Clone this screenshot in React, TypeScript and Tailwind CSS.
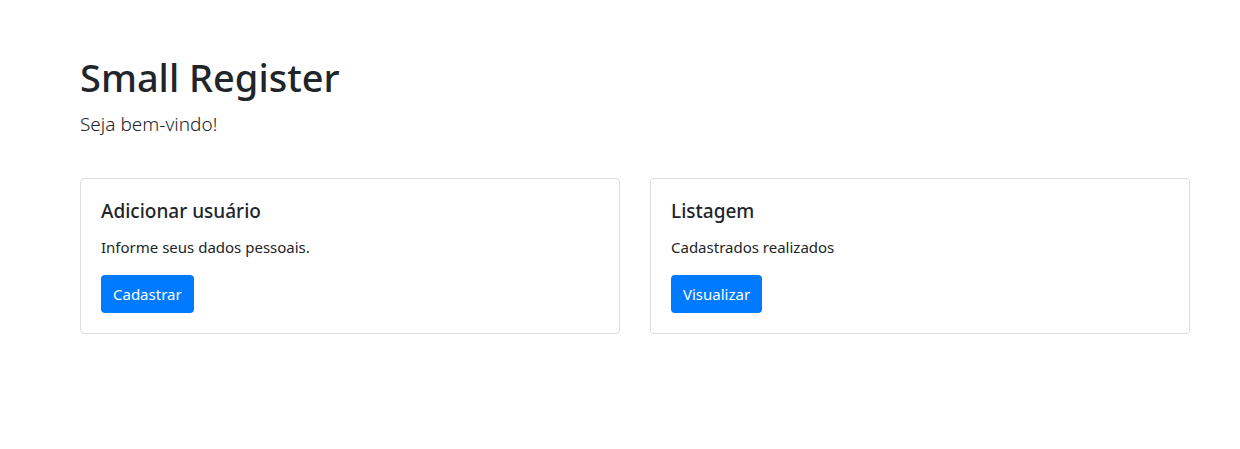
export default function App() {
  return (
    <div className="min-h-screen bg-white text-[#212529] font-['Noto_Sans',sans-serif]">
      <div className="pl-[80px] pr-[50px] pt-[53px]">
        <h1 className="text-[38px] leading-[48px] font-medium mb-2">Small Register</h1>
        <p className="text-[19px] leading-[30px] font-light mb-[39px]">Seja bem-vindo!</p>

        <div className="grid grid-cols-2 gap-[30px] w-[1110px]">
          {/* Card cadastro */}
          <div className="border border-black/[0.125] rounded p-5">
            <h5 className="text-[19px] leading-[24px] font-medium mb-3">Adicionar usuário</h5>
            <p className="text-[15px] leading-[24px] mb-4">Informe seus dados pessoais.</p>
            <a href="#" className="inline-block bg-[#007bff] text-white text-[15px] leading-[24px] px-3 py-[7px] rounded">
              Cadastrar
            </a>
          </div>

          {/* Card listagem */}
          <div className="border border-black/[0.125] rounded p-5">
            <h5 className="text-[19px] leading-[24px] font-medium mb-3">Listagem</h5>
            <p className="text-[15px] leading-[24px] mb-4">Cadastrados realizados</p>
            <a href="#" className="inline-block bg-[#007bff] text-white text-[15px] leading-[24px] px-3 py-[7px] rounded">
              Visualizar
            </a>
          </div>
        </div>
      </div>
    </div>
  )
}
